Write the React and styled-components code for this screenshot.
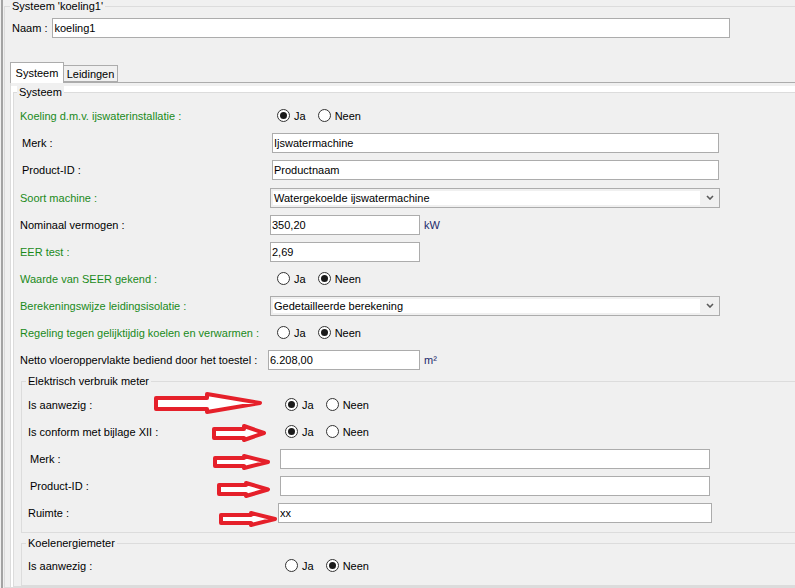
import React from 'react';
import styled, { createGlobalStyle } from 'styled-components';

const GlobalStyle = createGlobalStyle`
  html, body {
    margin: 0;
    padding: 0;
    background: #f0f0f0;
  }
  body {
    font-family: "Liberation Sans", Arial, sans-serif;
    font-size: 11px;
    color: #000;
  }
`;

const Screen = styled.div`
  width: 795px;
  height: 588px;
  overflow: hidden;
  background: #f0f0f0;
`;

const Window = styled.div`
  width: 830px;
  margin-left: 1px;
  border-left: 2px solid #a3a3a3;
  padding-left: 1px;
`;

const Group = styled.fieldset`
  margin: ${p => p.$margin || '0'};
  padding: 0;
  min-width: 0;
  border: 1px solid #dcdcdc;
  background: #f0f0f0;
`;

const Legend = styled.legend`
  margin-left: ${p => p.$offset}px;
  padding: 0 2px;
  line-height: 13px;
  background: #f0f0f0;
  color: #000;
`;

const GroupBody = styled.div`
  padding: ${p => p.$pad};
`;

const NameRow = styled.div`
  display: flex;
  align-items: center;
  gap: 5px;
  margin: 5px 0 0 2px;
  height: 20px;
`;

const TabStrip = styled.div`
  position: relative;
  z-index: 1;
  display: flex;
  align-items: flex-end;
  height: 20px;
  margin-top: 24px;
`;

const Tab = styled.div`
  box-sizing: border-box;
  width: 54px;
  height: ${p => (p.$active ? 21 : 17)}px;
  margin-bottom: ${p => (p.$active ? -1 : 0)}px;
  border: 1px solid #acacac;
  border-bottom: ${p => (p.$active ? 'none' : '1px solid #acacac')};
  border-left: ${p => (p.$active ? '1px solid #acacac' : 'none')};
  background: ${p => (p.$active ? '#fff' : '#f0f0f0')};
  display: flex;
  align-items: center;
  justify-content: center;
  white-space: nowrap;
`;

const TabPanel = styled.div`
  border-top: 1px solid #acacac;
  border-left: 1px solid #dcdcdc;
  padding-top: 3px;
`;

const Page = styled.div`
  background: #fff;
  padding-left: 2px;
`;

const Row = styled.div`
  position: relative;
  display: flex;
  align-items: center;
  height: ${p => p.$h || 27}px;
  padding-left: ${p => p.$indent || 0}px;
  margin-top: ${p => p.$gap || 0}px;
`;

const Label = styled.span`
  flex: none;
  width: 250px;
  white-space: nowrap;
  color: ${p => (p.$green ? '#1a8a1a' : '#000')};
`;

const TextInput = styled.input`
  box-sizing: border-box;
  width: ${p => p.$w}px;
  height: 20px;
  margin: 0 0 0 ${p => p.$nudge || 0}px;
  padding: 0 1px;
  border: 1px solid #acacac;
  border-radius: 0;
  background: #fff;
  font: inherit;
  color: #000;
  outline: none;
`;

const Unit = styled.span`
  margin-left: 4px;
  color: #1c2a6b;
`;

const Select = styled.div`
  box-sizing: border-box;
  display: flex;
  width: ${p => p.$w}px;
  height: 20px;
  padding: 2px 0 2px 2px;
  border: 1px solid #acacac;
  background: #f0f0f0;
`;

const SelectValue = styled.div`
  flex: 1;
  background: #fff;
  line-height: 14px;
  padding-left: 1px;
  white-space: nowrap;
  overflow: hidden;
`;

const Caret = styled.div`
  flex: none;
  width: 19px;
  display: flex;
  align-items: center;
  justify-content: center;
`;

const RadioGroup = styled.div`
  display: flex;
  align-items: center;
  gap: 12px;
  padding-left: 7px;
`;

const Option = styled.label`
  display: flex;
  align-items: center;
  gap: 4px;
`;

const Dot = styled.span`
  box-sizing: border-box;
  width: 13px;
  height: 13px;
  border-radius: 50%;
  border: 1px solid #333;
  background: #fff;
  display: flex;
  align-items: center;
  justify-content: center;

  &::after {
    content: '';
    display: ${p => (p.$checked ? 'block' : 'none')};
    width: 7px;
    height: 7px;
    border-radius: 50%;
    background: #1a1a1a;
  }
`;

const ArrowMark = styled.svg`
  position: absolute;
  left: ${p => p.$x}px;
  top: ${p => p.$y}px;
  overflow: visible;
`;

function Arrow({ x, y, w, h, head = 0.55 }) {
  const hx = Math.round(w * head);
  const top = Math.round(h * 0.25);
  const bot = Math.round(h * 0.75);
  return (
    <ArrowMark $x={x} $y={y} width={w} height={h} viewBox={`0 0 ${w} ${h}`}>
      <path
        d={`M2 ${top} H${hx} V2 L${w - 2} ${h / 2} L${hx} ${h - 2} V${bot} H2 Z`}
        fill="#fff"
        stroke="#e5202a"
        strokeWidth="4"
        strokeLinejoin="round"
      />
    </ArrowMark>
  );
}

function Radios({ value }) {
  return (
    <RadioGroup>
      <Option><Dot $checked={value === 'ja'} />Ja</Option>
      <Option><Dot $checked={value === 'neen'} />Neen</Option>
    </RadioGroup>
  );
}

function Dropdown({ w, value }) {
  return (
    <Select $w={w}>
      <SelectValue>{value}</SelectValue>
      <Caret>
        <svg width="8" height="5" viewBox="0 0 8 5">
          <polyline points="1,1 4,4 7,1" fill="none" stroke="#5a5a5a" strokeWidth="1.6" />
        </svg>
      </Caret>
    </Select>
  );
}

export default function App() {
  return (
    <Screen>
      <GlobalStyle />
      <Window>
        <Group>
          <Legend $offset={5}>Systeem 'koeling1'</Legend>
          <GroupBody $pad="0 0 0 5px">
            <NameRow>
              <span>Naam :</span>
              <TextInput $w={678} readOnly defaultValue="koeling1" />
            </NameRow>

            <TabStrip>
              <Tab $active>Systeem</Tab>
              <Tab>Leidingen</Tab>
            </TabStrip>

            <TabPanel>
              <Page>
                <Group>
                  <Legend $offset={3}>Systeem</Legend>
                  <GroupBody $pad="3px 0 0 6px">
                    <Row>
                      <Label $green>Koeling d.m.v. ijswaterinstallatie :</Label>
                      <Radios value="ja" />
                    </Row>
                    <Row $indent={2}>
                      <Label>Merk :</Label>
                      <TextInput $w={447} readOnly defaultValue="Ijswatermachine" />
                    </Row>
                    <Row $indent={2}>
                      <Label>Product-ID :</Label>
                      <TextInput $w={447} readOnly defaultValue="Productnaam" />
                    </Row>
                    <Row $gap={1}>
                      <Label $green>Soort machine :</Label>
                      <Dropdown w={450} value="Watergekoelde ijswatermachine" />
                    </Row>
                    <Row>
                      <Label>Nominaal vermogen :</Label>
                      <TextInput $w={150} readOnly defaultValue="350,20" />
                      <Unit>kW</Unit>
                    </Row>
                    <Row>
                      <Label $green>EER test :</Label>
                      <TextInput $w={150} readOnly defaultValue="2,69" />
                    </Row>
                    <Row>
                      <Label $green>Waarde van SEER gekend :</Label>
                      <Radios value="neen" />
                    </Row>
                    <Row>
                      <Label $green>Berekeningswijze leidingsisolatie :</Label>
                      <Dropdown w={450} value="Gedetailleerde berekening" />
                    </Row>
                    <Row>
                      <Label $green>Regeling tegen gelijktijdig koelen en verwarmen :</Label>
                      <Radios value="neen" />
                    </Row>
                    <Row>
                      <Label>Netto vloeroppervlakte bediend door het toestel :</Label>
                      <TextInput $w={152} $nudge={-2} readOnly defaultValue="6.208,00" />
                      <Unit>m²</Unit>
                    </Row>

                    <Group $margin="2px 0 0 1px">
                      <Legend $offset={4}>Elektrisch verbruik meter</Legend>
                      <GroupBody $pad="3px 0 6px 6px">
                        <Row>
                          <Label>Is aanwezig :</Label>
                          <Radios value="ja" />
                          <Arrow x={126} y={1} w={108} h={22} head={0.49} />
                        </Row>
                        <Row>
                          <Label>Is conform met bijlage XII :</Label>
                          <Radios value="ja" />
                          <Arrow x={184} y={6} w={54} h={18} head={0.6} />
                        </Row>
                        <Row $indent={2}>
                          <Label>Merk :</Label>
                          <TextInput $w={430} readOnly defaultValue="" />
                          <Arrow x={185} y={9} w={57} h={16} />
                        </Row>
                        <Row $indent={2}>
                          <Label>Product-ID :</Label>
                          <TextInput $w={430} readOnly defaultValue="" />
                          <Arrow x={189} y={9} w={53} h={17} />
                        </Row>
                        <Row>
                          <Label>Ruimte :</Label>
                          <TextInput $w={434} readOnly defaultValue="xx" />
                          <Arrow x={191} y={12} w={58} h={16} />
                        </Row>
                      </GroupBody>
                    </Group>

                    <Group $margin="4px 0 0 1px">
                      <Legend $offset={4}>Koelenergiemeter</Legend>
                      <GroupBody $pad="2px 0 6px 6px">
                        <Row>
                          <Label>Is aanwezig :</Label>
                          <Radios value="neen" />
                        </Row>
                      </GroupBody>
                    </Group>
                  </GroupBody>
                </Group>
              </Page>
            </TabPanel>
          </GroupBody>
        </Group>
      </Window>
    </Screen>
  );
}
